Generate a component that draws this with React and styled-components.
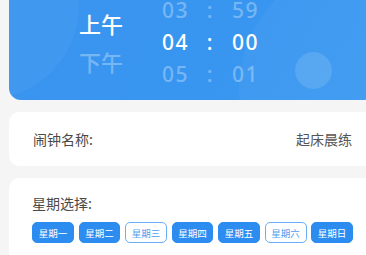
import React from "react";
import styled, { createGlobalStyle } from "styled-components";

const Global = createGlobalStyle`
  html, body { margin: 0; padding: 0; background: #f5f5f5; }
  body { font-family: "Noto Sans", "Noto Sans CJK SC", sans-serif; overflow: hidden; }
  #root { width: 366px; height: 255px; overflow: hidden; }
`;

const Page = styled.div`
  width: 366px;
  padding-left: 9px;
  box-sizing: border-box;
  overflow: hidden;
`;

const Header = styled.div`
  position: relative;
  width: 367px;
  height: 100px;
  border-radius: 0 0 12px 12px;
  background: linear-gradient(120deg, #3a94ef 0%, #3896f0 60%, #3d9af1 100%);
  overflow: hidden;
  display: flex;
  align-items: flex-start;
  padding-left: 70px;
  box-sizing: border-box;
`;

const Blob = styled.div`
  position: absolute;
  border-radius: 50%;
  background: rgba(255, 255, 255, ${(p) => p.$alpha});
  left: ${(p) => p.$x}px;
  top: ${(p) => p.$y}px;
  width: ${(p) => p.$d}px;
  height: ${(p) => p.$d}px;
  pointer-events: none;
`;

const MeridiemCol = styled.div`
  width: 83px;
  padding-top: 4px;
  display: flex;
  flex-direction: column;
  font-family: "Noto Sans CJK SC", sans-serif;
  font-size: 22px;
  line-height: 38px;
  position: relative;
`;

const Meridiem = styled.div`
  color: ${(p) => (p.$active ? "#ffffff" : "rgba(255,255,255,0.32)")};
  font-weight: 500;
`;

const TimeCol = styled.div`
  margin-top: -6px;
  display: flex;
  flex-direction: column;
  position: relative;
`;

const TimeRow = styled.div`
  display: flex;
  align-items: center;
  height: 32px;
  line-height: 19px;
  font-family: "Noto Sans", sans-serif;
  font-size: 21px;
  font-weight: 500;
  letter-spacing: 1.5px;
  color: ${(p) => (p.$active ? "#ffffff" : "rgba(255,255,255,0.32)")};
`;

const Hour = styled.span`
  width: 25px;
`;

const Colon = styled.span`
  width: 45px;
  text-align: center;
  letter-spacing: 0;
`;

const Card = styled.div`
  width: 367px;
  box-sizing: border-box;
  margin-top: 12px;
  background: #ffffff;
  border-radius: 10px;
  font-family: "Noto Sans CJK SC", sans-serif;
`;

const NameCard = styled(Card)`
  height: 54px;
  padding: 0 24px;
  display: flex;
  align-items: center;
  justify-content: space-between;
  font-size: 14px;
`;

const Label = styled.span`
  color: #4a4a4a;
  font-size: 14px;
  line-height: 20px;
`;

const Value = styled.span`
  color: #555555;
`;

const DaysCard = styled(Card)`
  height: 90px;
  padding: 15px 23px 0;
  display: flex;
  flex-direction: column;
`;

const DayRow = styled.div`
  margin-top: 9px;
  display: flex;
  gap: 4.7px;
`;

const Day = styled.div`
  width: 43px;
  height: 21px;
  box-sizing: border-box;
  border-radius: 5px;
  border: 1px solid ${(p) => (p.$on ? "#2d8cf0" : "#6aaef3")};
  background: ${(p) => (p.$on ? "#2d8cf0" : "#ffffff")};
  color: ${(p) => (p.$on ? "#ffffff" : "#4d9ef2")};
  font-size: 9.5px;
  display: flex;
  align-items: center;
  justify-content: center;
`;

const days = [
  ["星期一", true],
  ["星期二", true],
  ["星期三", false],
  ["星期四", true],
  ["星期五", true],
  ["星期六", false],
  ["星期日", true],
];

export default function App() {
  return (
    <>
      <Global />
      <Page>
        <Header>
          <Blob $x={-120} $y={-90} $d={190} $alpha={0.04} />
          <Blob $x={230} $y={-40} $d={260} $alpha={0.035} />
          <Blob $x={286} $y={52} $d={37} $alpha={0.12} />
          <MeridiemCol>
            <Meridiem $active>上午</Meridiem>
            <Meridiem>下午</Meridiem>
          </MeridiemCol>
          <TimeCol>
            <TimeRow>
              <Hour>03</Hour>
              <Colon>:</Colon>
              <span>59</span>
            </TimeRow>
            <TimeRow $active>
              <Hour>04</Hour>
              <Colon>:</Colon>
              <span>00</span>
            </TimeRow>
            <TimeRow>
              <Hour>05</Hour>
              <Colon>:</Colon>
              <span>01</span>
            </TimeRow>
          </TimeCol>
        </Header>
        <NameCard>
          <Label>闹钟名称:</Label>
          <Value>起床晨练</Value>
        </NameCard>
        <DaysCard>
          <Label>星期选择:</Label>
          <DayRow>
            {days.map(([d, on]) => (
              <Day key={d} $on={on}>
                {d}
              </Day>
            ))}
          </DayRow>
        </DaysCard>
      </Page>
    </>
  );
}
